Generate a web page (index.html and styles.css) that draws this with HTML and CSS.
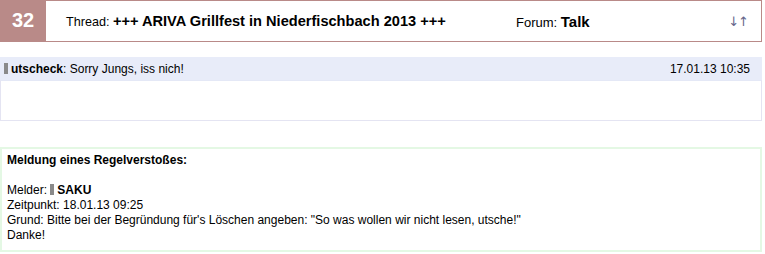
FILE: index.html
```html
<!DOCTYPE html>
<html lang="de">
<head>
    <meta charset="UTF-8">
    <title>Thread: +++ ARIVA Grillfest in Niederfischbach 2013 +++</title>
    <link rel="stylesheet" href="styles.css">
</head>
<body>
    <!-- Kopfzeile des Threads -->
    <header class="thread-head">
        <div class="thread-num">32</div>
        <div class="thread-title">Thread: <b>+++ ARIVA Grillfest in Niederfischbach 2013 +++</b></div>
        <div class="thread-forum">Forum: <b>Talk</b></div>
        <div class="thread-sort">&darr;&uarr;</div>
    </header>

    <!-- Beitrag -->
    <section class="post">
        <div class="post-head">
            <div class="post-author"><span class="user-bar"></span><b>utscheck</b>: Sorry Jungs, iss nich!</div>
            <div class="post-date">17.01.13 10:35</div>
        </div>
        <div class="post-body"></div>
    </section>

    <!-- Regelverstoß -->
    <section class="report">
        <p class="report-title">Meldung eines Regelverstoßes:</p>
        <p>
            Melder: <span class="user-bar"></span><b>SAKU</b><br>
            Zeitpunkt: 18.01.13 09:25<br>
            Grund: Bitte bei der Begründung für's Löschen angeben: "So was wollen wir nicht lesen, utsche!"<br>
            Danke!
        </p>
    </section>
</body>
</html>
```

FILE: styles.css
```css
* {
    margin: 0;
    padding: 0;
    box-sizing: border-box;
}

body {
    font-family: 'Liberation Sans', Arial, sans-serif;
    font-size: 12px;
    color: #000;
    background: #fff;
    width: 762px;
}

/* Kopfzeile */
.thread-head {
    display: flex;
    align-items: center;
    height: 42px;
    border: 1px solid #b98a88;
}

.thread-num {
    background: #b98a88;
    color: #fff;
    font-size: 20px;
    font-weight: bold;
    display: flex;
    align-items: center;
    justify-content: center;
    margin-top: -1px;
    margin-left: -1px;
    height: 41px;
    width: 46px;
}

.thread-title {
    padding-left: 20px;
    width: 470px;
    font-size: 12.6px;
}

.thread-title b {
    font-size: 14.6px;
}

.thread-forum {
    flex: 1;
    font-size: 13px;
}

.thread-forum b {
    font-size: 15px;
}

.thread-sort {
    color: #66668a;
    font-family: 'DejaVu Sans', sans-serif;
    font-size: 13px;
    letter-spacing: -1px;
    padding-right: 13px;
}

/* Beitrag */
.post {
    margin-top: 15px;
}

.post-head {
    display: flex;
    justify-content: space-between;
    align-items: center;
    height: 23px;
    background: #e8ecf9;
    padding: 0 12px 0 4px;
}

.post-body {
    height: 41px;
    border: 1px solid #e4e4f2;
    border-top: 1px solid #e4e8f6;
}

.user-bar {
    display: inline-block;
    width: 4px;
    height: 11px;
    background: #8a8a8a;
    margin-right: 3px;
    vertical-align: -1px;
}

/* Regelverstoß */
.report {
    margin-top: 26px;
    border: 2px solid #e4f8e4;
    padding: 4px 5px 7px;
    line-height: 15px;
}

.report p + p {
    margin-top: 15px;
}

.report-title {
    font-weight: bold;
}
```
